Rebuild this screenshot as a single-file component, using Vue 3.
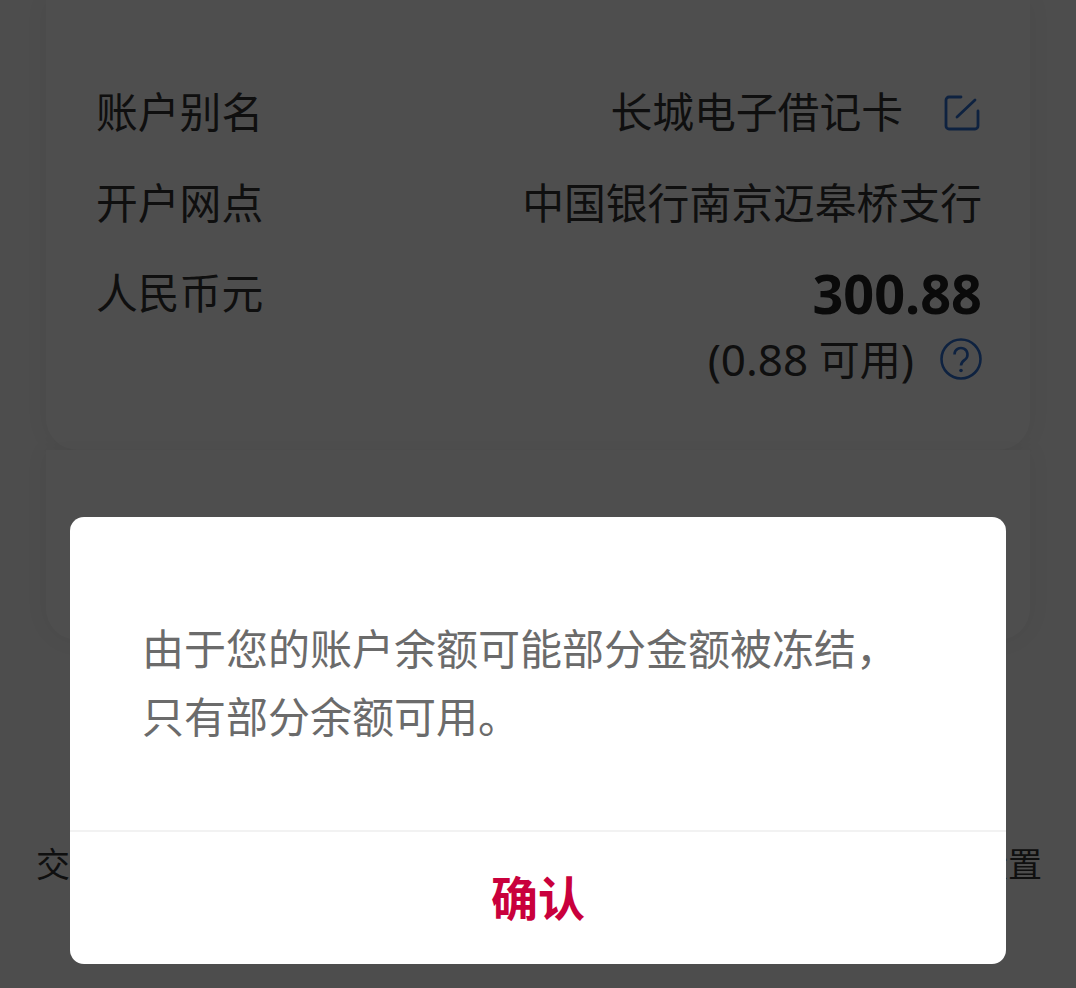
<script setup>
const rows = [
  { label: '账户别名', value: '长城电子借记卡', edit: true },
  { label: '开户网点', value: '中国银行南京迈皋桥支行' }
]
</script>

<template>
  <div class="page">
    <div class="cards">
      <section class="card account">
        <div v-for="row in rows" :key="row.label" class="row">
          <span class="label">{{ row.label }}</span>
          <span class="value">
            {{ row.value }}
            <svg v-if="row.edit" class="edit" width="36" height="36" viewBox="0 0 36 36" fill="none">
              <path d="M17 2H5a3 3 0 0 0-3 3v26a3 3 0 0 0 3 3h26a3 3 0 0 0 3-3V16" />
              <path d="M13 22 31 5" />
            </svg>
          </span>
        </div>
        <div class="row balance">
          <span class="label">人民币元</span>
          <div class="amounts">
            <div class="amount">300.88</div>
            <div class="available">
              <span class="num">(0.88</span>&nbsp;可用<span class="num">)</span>
              <svg class="help" width="42" height="42" viewBox="0 0 42 42" fill="none">
                <circle cx="21" cy="21" r="19.5" />
                <path d="M14.5 16.5a6.5 6.5 0 1 1 10.4 5.2c-2.4 1.8-3.9 2.8-3.9 5.8" />
                <circle class="dot" cx="21" cy="32.5" r="1.8" />
              </svg>
            </div>
          </div>
        </div>
      </section>
      <section class="card second"></section>
    </div>

    <div class="tabs">
      <span>交易明细</span>
      <span>账户设置</span>
    </div>

    <div class="mask">
      <div class="dialog">
        <div class="message">
          由于您的账户余额可能部分金额被冻结，<br />只有部分余额可用。
        </div>
        <div class="confirm">确认</div>
      </div>
    </div>
  </div>
</template>

<style>
body {
  margin: 0;
}
</style>

<style scoped>
.page {
  position: relative;
  width: 1076px;
  height: 988px;
  overflow: hidden;
  background: #fafafa;
  font-family: "Noto Sans CJK SC", "Noto Sans", sans-serif;
  color: #333;
}

.cards {
  padding: 0 46px;
}

.card {
  background: #fff;
  border-radius: 0 0 32px 32px;
  box-shadow: 0 0 24px rgba(0, 0, 0, 0.05);
}

.account {
  height: 450px;
  padding: 65px 48px 0 50px;
  box-sizing: border-box;
}

.second {
  height: 190px;
}

.row {
  display: flex;
  justify-content: space-between;
  align-items: center;
  height: 91px;
  font-size: 41.8px;
  line-height: 91px;
}

.balance .label {
  margin-top: -1px;
}

.value {
  display: flex;
  align-items: center;
}

.edit {
  margin: 5px 2px 0 41px;
  stroke: #2f6fd0;
  stroke-width: 2.8;
  stroke-linecap: round;
}

.balance {
  align-items: flex-start;
}

.amounts {
  text-align: right;
}

.amount {
  padding-top: 1px;
  font-family: "Noto Sans", sans-serif;
  font-size: 54px;
  font-weight: 700;
  line-height: 91px;
  color: #222;
}

.available {
  display: flex;
  align-items: center;
  justify-content: flex-end;
  margin-top: -13px;
  font-family: "Noto Sans", "Noto Sans CJK SC", sans-serif;
  font-size: 41px;
  line-height: 66px;
}

.num {
  font-size: 44px;
}

.help {
  margin-left: 26px;
  stroke: #2f6fd0;
  stroke-width: 2.6;
}

.help .dot {
  fill: #2f6fd0;
  stroke: none;
}

.tabs {
  display: flex;
  justify-content: space-between;
  margin-top: 198px;
  padding: 0 34px 0 36px;
  font-size: 34px;
  line-height: 50px;
}

.mask {
  position: absolute;
  inset: 0;
  background: rgba(0, 0, 0, 0.695);
}

.dialog {
  position: absolute;
  left: 70px;
  top: 517px;
  width: 936px;
  height: 447px;
  background: #fff;
  border-radius: 14px;
  display: flex;
  flex-direction: column;
}

.message {
  flex: 1;
  padding: 96px 72px 0;
  border-bottom: 2px solid #f2f2f2;
  font-size: 42px;
  line-height: 68px;
  color: #6b6b6b;
}

.confirm {
  height: 132px;
  padding-bottom: 6px;
  box-sizing: border-box;
  display: flex;
  align-items: center;
  justify-content: center;
  font-size: 47px;
  font-weight: 700;
  color: #c9003c;
}
</style>
